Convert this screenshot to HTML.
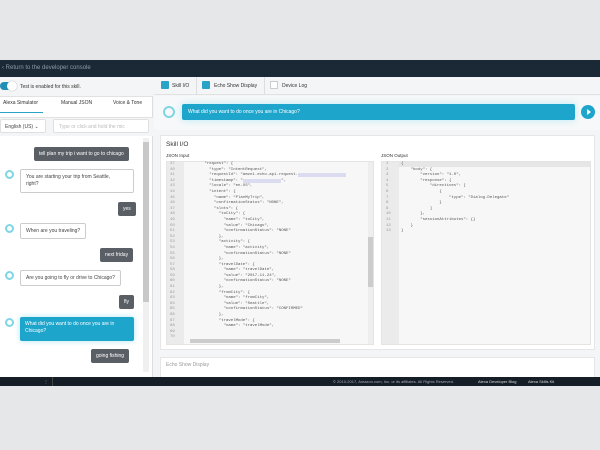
<!DOCTYPE html>
<html><head><style>
*{margin:0;padding:0;box-sizing:border-box}
body{width:600px;height:450px;background:#e6e7e8;font-family:"Liberation Sans",sans-serif;position:relative;overflow:hidden;color:#333}
.a{position:absolute}
.hdr{left:0;top:60px;width:600px;height:17px;background:#1b2836;color:#8a9bab;font-size:6px;line-height:17px;padding-left:2px}
.main{left:0;top:77px;width:600px;height:300px;background:#f4f5f6}
.left{left:0;top:77px;width:153px;height:300px;background:#fff;border-right:1px solid #ddd}
.t{font-size:5px;color:#333;white-space:nowrap}
.ub{background:#5a5f66;color:#fff;font-size:5px;border-radius:2px;padding:4px 5px;white-space:nowrap}
.ab{background:#fff;border:1px solid #ccc;font-size:5px;border-radius:2px;padding:4px 5px;color:#444}
.circ{width:9px;height:9px;border:2px solid #7fd6e4;border-radius:50%}
.chk{width:8px;height:8px;background:#29a3c8;border-radius:1px}
.card{background:#fff;border:1px solid #e6e6e6}
.ed{background:#f7f7f7;border:1px solid #e4e4e4}
.gut{background:#ebebeb}
.code{font-family:"Liberation Mono",monospace;font-size:4px;line-height:5.6px;color:#555;white-space:pre}
.ftr{left:0;top:377px;width:600px;height:9px;background:#151e27;color:#aab;font-size:4px;line-height:9px}
</style></head><body>
<div class="a hdr">‹ Return to the developer console</div>
<div class="a main"></div>
<div class="a left"></div>
<div class="a" style="left:0;top:77px;width:153px;height:20px;background:#f4f5f6;border-bottom:1px solid #e2e2e2"></div>
<div class="a" style="left:0;top:82px;width:14px;height:8px;background:#1f8fb8;border-radius:4px"></div>
<div class="a" style="left:7px;top:81px;width:10px;height:10px;background:#fff;border-radius:50%;box-shadow:0 0 1px #888"></div>
<div class="a t" style="left:20px;top:84px">Test is enabled for this skill.</div>
<div class="a t" style="left:3px;top:100px">Alexa Simulator</div>
<div class="a" style="left:0;top:112px;width:43px;height:1px;background:#29a3c8"></div>
<div class="a t" style="left:61px;top:100px">Manual JSON</div>
<div class="a t" style="left:113px;top:100px">Voice &amp; Tone</div>
<div class="a" style="left:0;top:117px;width:153px;height:19px;background:#f4f5f6;border-top:1px solid #e2e2e2"></div>
<div class="a ab" style="left:0;top:119px;width:46px;height:14px;border-color:#e0e0e0;padding:4px 4px">English (US) ⌄</div>
<div class="a ab" style="left:53px;top:119px;width:96px;height:14px;border-color:#e0e0e0;color:#bbb;padding:4px 5px">Type or click and hold the mic</div>
<div class="a" style="left:143px;top:138px;width:6px;height:234px;background:#f0f0f0"></div>
<div class="a" style="left:143px;top:142px;width:6px;height:160px;background:#c8c8c8"></div>
<div class="a ub" style="left:34px;top:147px">tell plan my trip i want to go to chicago</div>
<div class="a circ" style="left:5px;top:170px"></div>
<div class="a ab" style="left:20px;top:169px;width:114px;line-height:7px">You are starting your trip from Seattle,<br>right?</div>
<div class="a ub" style="left:118px;top:202px">yes</div>
<div class="a circ" style="left:5px;top:224px"></div>
<div class="a ab" style="left:20px;top:223px">When are you traveling?</div>
<div class="a ub" style="left:100px;top:248px">next friday</div>
<div class="a circ" style="left:5px;top:271px"></div>
<div class="a ab" style="left:20px;top:270px">Are you going to fly or drive to Chicago?</div>
<div class="a ub" style="left:119px;top:295px">fly</div>
<div class="a circ" style="left:5px;top:318px"></div>
<div class="a" style="left:20px;top:317px;width:114px;height:24px;background:#1ea5cc;color:#fff;font-size:5px;line-height:7px;border-radius:2px;padding:4px 5px;box-shadow:0 0 6px #aee7f3">What did you want to do once you are in Chicago?</div>
<div class="a ub" style="left:91px;top:349px">going fishing</div>
<div class="a" style="left:154px;top:77px;width:446px;height:18px;background:#f4f5f6;border-bottom:1px solid #e2e2e2"></div>
<div class="a chk" style="left:161px;top:81px"></div><div class="a t" style="left:172px;top:83px">Skill I/O</div>
<div class="a" style="left:196px;top:77px;width:1px;height:18px;background:#ddd"></div>
<div class="a chk" style="left:202px;top:81px"></div><div class="a t" style="left:214px;top:83px">Echo Show Display</div>
<div class="a" style="left:264px;top:77px;width:1px;height:18px;background:#ddd"></div>
<div class="a" style="left:270px;top:81px;width:8px;height:8px;border:1px solid #ccc;background:#fff"></div><div class="a t" style="left:282px;top:83px">Device Log</div>
<div class="a" style="left:154px;top:96px;width:446px;height:34px;background:#f7f8f9"></div>
<div class="a" style="left:163px;top:106px;width:12px;height:12px;border:2px solid #7fd6e4;border-radius:50%"></div>
<div class="a" style="left:182px;top:104px;width:393px;height:16px;background:#1ea5cc;border-radius:2px;color:#fff;font-size:5px;line-height:16px;padding-left:6px;box-shadow:0 0 8px #b5eaf5">What did you want to do once you are in Chicago?</div>
<div class="a" style="left:581px;top:105px;width:14px;height:14px;background:#1ea5cc;border-radius:50%"></div>
<div class="a" style="left:587px;top:109px;width:0;height:0;border-left:4px solid #fff;border-top:3px solid transparent;border-bottom:3px solid transparent"></div>
<div class="a card" style="left:160px;top:135px;width:435px;height:215px"></div>
<div class="a" style="left:166px;top:141px;font-size:6.5px;color:#333">Skill I/O</div>
<div class="a t" style="left:166px;top:153px;font-size:4.5px">JSON Input</div>
<div class="a t" style="left:381px;top:153px;font-size:4.5px">JSON Output</div>
<div class="a ed" style="left:166px;top:161px;width:208px;height:184px"></div>
<div class="a gut" style="left:167px;top:162px;width:17px;height:182px"></div>
<div class="a" style="left:368px;top:162px;width:5px;height:182px;background:#eee"></div>
<div class="a" style="left:368px;top:237px;width:5px;height:50px;background:#ccc"></div>
<div class="a" style="left:190px;top:339px;width:150px;height:4px;background:#ccc"></div>
<div class="a code" style="left:170px;top:162px;color:#999">37
40
41
42
43
44
45
46
47
48
49
50
51
52
53
54
55
56
57
58
59
60
61
62
63
64
65
66
67
68
69
70</div>
<div class="a code" style="left:190px;top:162px">      "request": {
        "type": "IntentRequest",
        "requestId": "amzn1.echo-api.request.<span style="background:#dcdcf0;color:#dcdcf0">xxxxxxxxxxxxxxxxxxxx</span>
        "timestamp": "<span style="background:#dcdcf0;color:#dcdcf0">xxxxxxxxxxxxxxxx</span>",
        "locale": "en-US",
        "intent": {
          "name": "PlanMyTrip",
          "confirmationStatus": "NONE",
          "slots": {
            "toCity": {
              "name": "toCity",
              "value": "Chicago",
              "confirmationStatus": "NONE"
            },
            "activity": {
              "name": "activity",
              "confirmationStatus": "NONE"
            },
            "travelDate": {
              "name": "travelDate",
              "value": "2017-11-24",
              "confirmationStatus": "NONE"
            },
            "fromCity": {
              "name": "fromCity",
              "value": "Seattle",
              "confirmationStatus": "CONFIRMED"
            },
            "travelMode": {
              "name": "travelMode",</div>
<div class="a ed" style="left:381px;top:161px;width:210px;height:184px"></div>
<div class="a gut" style="left:382px;top:162px;width:17px;height:182px"></div>
<div class="a" style="left:399px;top:162px;width:191px;height:5px;background:#e6e6e6"></div>
<div class="a code" style="left:386px;top:162px;color:#999">1
2
3
4
5
6
7
8
9
10
11
12
13</div>
<div class="a code" style="left:401px;top:162px">{
    "body": {
        "version": "1.0",
        "response": {
            "directives": [
                {
                    "type": "Dialog.Delegate"
                }
            ]
        },
        "sessionAttributes": {}
    }
}</div>
<div class="a card" style="left:160px;top:357px;width:435px;height:22px"></div>
<div class="a t" style="left:166px;top:362px;color:#999">Echo Show Display</div>
<div class="a ftr"><span style="position:absolute;left:44px;color:#ccc">⋮</span><span style="position:absolute;left:52px;top:0;width:1px;height:9px;background:#444"></span><span style="position:absolute;left:333px">© 2010-2017, Amazon.com, Inc. or its affiliates. All Rights Reserved.</span><span style="position:absolute;left:478px;color:#ddd">Alexa Developer Blog</span><span style="position:absolute;left:528px;color:#ddd">Alexa Skills Kit</span></div>
</body></html>
